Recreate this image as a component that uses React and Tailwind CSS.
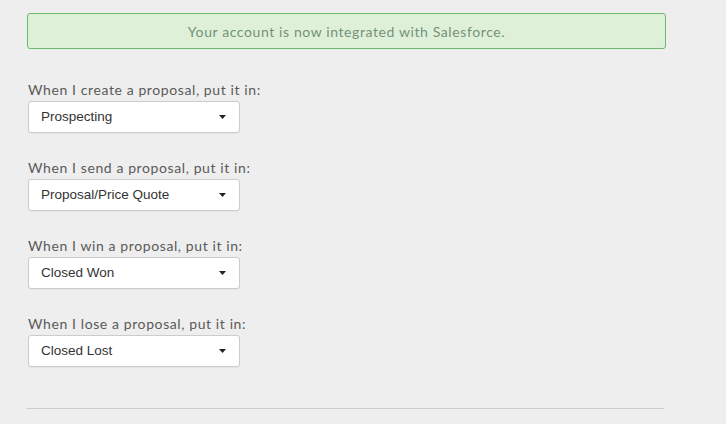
import React from 'react';

const stages = [
    { label: 'When I create a proposal, put it in:', value: 'Prospecting' },
    { label: 'When I send a proposal, put it in:', value: 'Proposal/Price Quote' },
    { label: 'When I win a proposal, put it in:', value: 'Closed Won' },
    { label: 'When I lose a proposal, put it in:', value: 'Closed Lost' },
];

const StageSelect = ({ value }) => (
    <div className="flex h-8 w-[212px] items-center justify-between rounded-[3px] border border-[#cccccc] bg-white pl-3 pr-[13px] font-['Liberation_Sans',Arial,sans-serif] text-[13.5px] tracking-normal text-[#333333] shadow-[0_1px_1px_rgba(0,0,0,0.04)]">
        <span>{value}</span>
        <svg width="7" height="4" viewBox="0 0 7 4" className="fill-[#222222]">
            <polygon points="0,0 7,0 3.5,4" />
        </svg>
    </div>
);

const App = () => {
    return (
        <div className="min-h-[424px] bg-[#eeeeee] pl-[27px] pt-[13px] font-['Lato',sans-serif] tracking-[0.6px]">
            {/* Success alert */}
            <div className="flex h-[36px] w-[639px] items-center justify-center rounded-[3px] border border-[#6dba6d] bg-[#dff0d8] text-[14px] text-[#74927a]">
                Your account is now integrated with Salesforce.
            </div>

            {/* Stage mapping */}
            <div className="mt-[31px] flex flex-col gap-[25px] pl-px">
                {stages.map((s) => (
                    <div key={s.label} className="flex flex-col gap-px">
                        <p className="text-[14px] leading-5 text-[#5a5a5a]">{s.label}</p>
                        <StageSelect value={s.value} />
                    </div>
                ))}
            </div>

            <div className="mt-[41px] h-px w-[637px] bg-[#cccccc]" />
        </div>
    );
};

export default App;
